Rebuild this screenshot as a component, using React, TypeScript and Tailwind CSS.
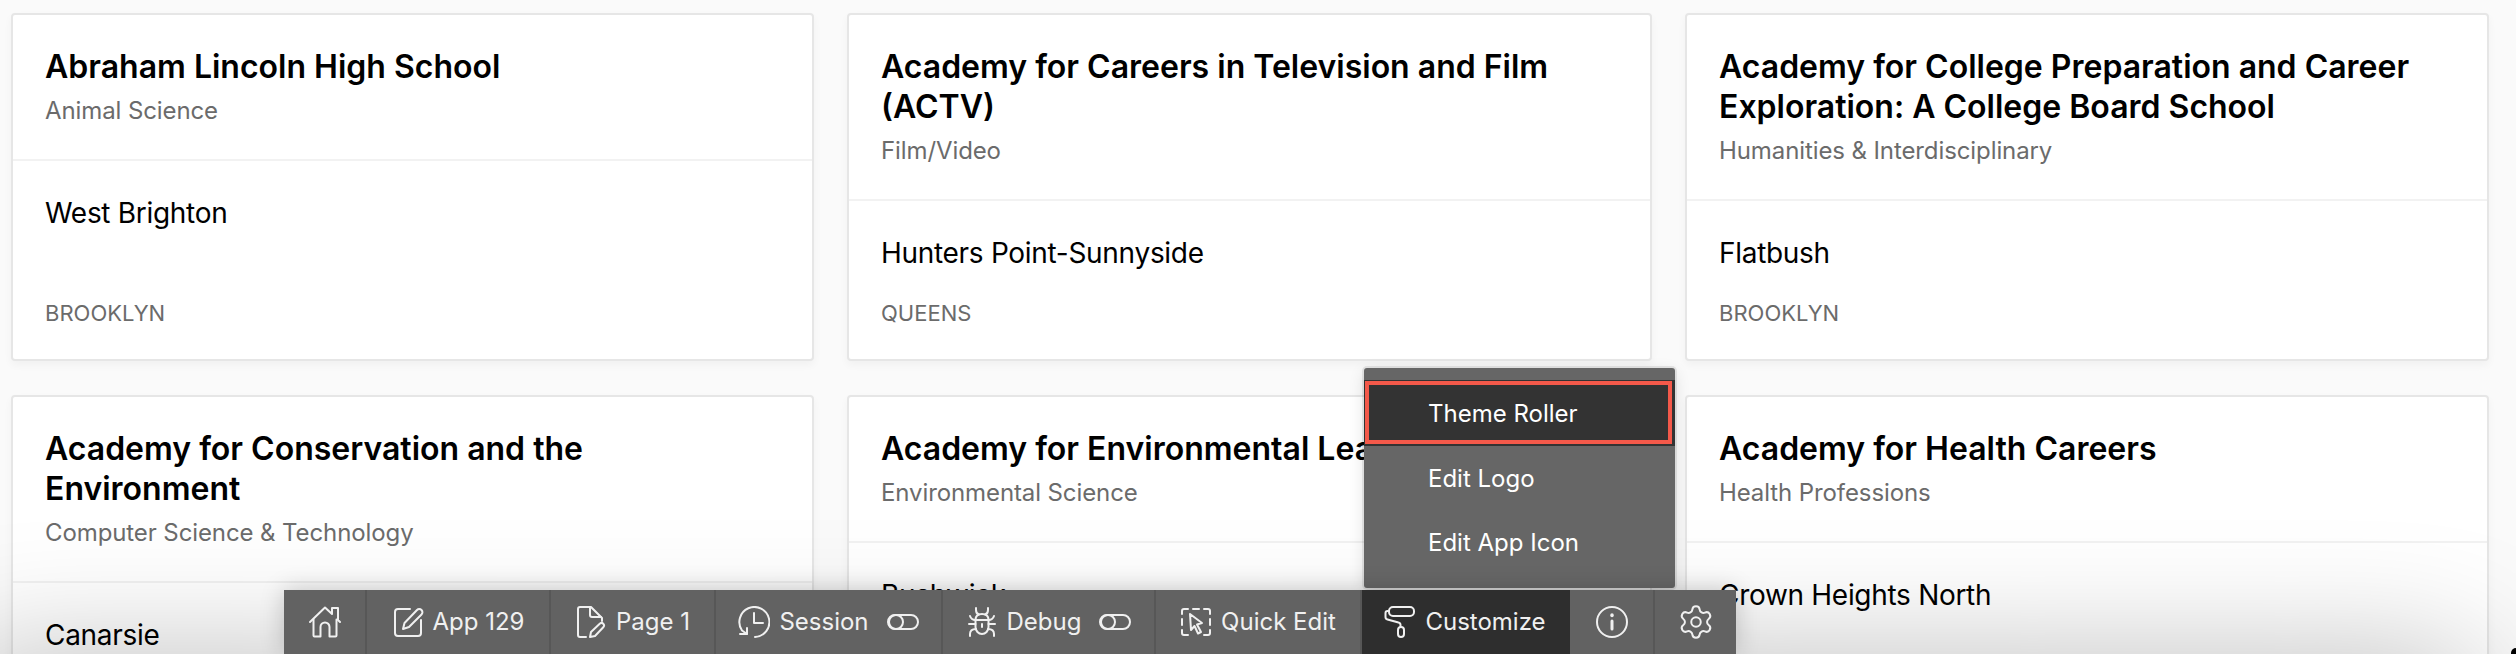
import { Settings } from "lucide-react";
import type { ReactNode } from "react";

const schools = [
  { name: "Abraham Lincoln High School", field: "Animal Science", area: "West Brighton", borough: "BROOKLYN" },
  { name: "Academy for Careers in Television and Film (ACTV)", field: "Film/Video", area: "Hunters Point-Sunnyside", borough: "QUEENS" },
  { name: "Academy for College Preparation and Career Exploration: A College Board School", field: "Humanities & Interdisciplinary", area: "Flatbush", borough: "BROOKLYN" },
  { name: "Academy for Conservation and the Environment", field: "Computer Science & Technology", area: "Canarsie", borough: "BROOKLYN" },
  { name: "Academy for Environmental Leadership", field: "Environmental Science", area: "Bushwick", borough: "BROOKLYN" },
  { name: "Academy for Health Careers", field: "Health Professions", area: "Crown Heights North", borough: "BROOKLYN" },
];

function SchoolCard({ school }: { school: (typeof schools)[number] }) {
  return (
    <div className="flex h-[348px] flex-col rounded-[4px] border-2 border-[#e6e6e6] bg-white shadow-[0_4px_8px_rgba(0,0,0,0.04)]">
      <div className="border-b-2 border-[#f2f2f2] px-[32px] pt-[32px] pb-[32px]">
        <h2 className="text-[32px] leading-[40px] font-semibold text-black">{school.name}</h2>
        <p className="mt-[8px] text-[24px] leading-[32px] tracking-[-0.1px] text-[#6b6b6b]">{school.field}</p>
      </div>
      <div className="flex flex-1 flex-col justify-between px-[32px] pt-[30px] pb-[30px]">
        <p className="text-[28px] leading-[44px] tracking-[-0.3px] text-black">{school.area}</p>
        <p className="text-[22px] leading-[32px] text-[#6b6b6b]">{school.borough}</p>
      </div>
    </div>
  );
}

function ToolbarItem({ width, active, children }: { width: string; active?: boolean; children: ReactNode }) {
  return (
    <div
      className={`flex h-full shrink-0 items-center justify-center border-r-2 ${width} ${
        active ? "border-[#2e2e2e] bg-[#2e2e2e]" : "border-[#575757]"
      }`}
    >
      {children}
    </div>
  );
}

function Icon({ children }: { children: ReactNode }) {
  return (
    <svg
      viewBox="0 0 32 32"
      className="mr-[9px] h-[32px] w-[32px] shrink-0"
      fill="none"
      stroke="currentColor"
      strokeWidth={2}
      strokeLinecap="round"
      strokeLinejoin="round"
    >
      {children}
    </svg>
  );
}

function SessionToggle() {
  return (
    <svg viewBox="0 0 32 16" className="ml-[18px] h-[16px] w-[32px] shrink-0" fill="none" stroke="currentColor" strokeWidth={2}>
      <rect x="1" y="1" width="30" height="14" rx="7" />
      <circle cx="9" cy="8" r="7" />
    </svg>
  );
}

export default function App() {
  return (
    <div className="relative h-[654px] w-[2516px] overflow-hidden bg-[#fafafa] font-['Inter',sans-serif]">
      <div className="grid grid-cols-[803px_805px_804px] gap-x-[33px] gap-y-[34px] pt-[13px] pl-[11px]">
        {schools.map((school) => (
          <SchoolCard key={school.name} school={school} />
        ))}
      </div>

      {/* soft shade rising from the bottom of the window */}
      <div className="absolute top-[654px] right-[40px] left-[-40px] h-[200px] shadow-[0_0_128px_rgba(0,0,0,0.26)]" />

      {/* Customize menu */}
      <div className="absolute top-[368px] left-[1364px] w-[311px] rounded-[3px] bg-[#666666] pt-[12px] pb-[14px] text-[24px] text-white shadow-[0_0_0_2px_rgba(0,0,0,0.08),0_4px_16px_rgba(0,0,0,0.12)]">
        <div className="h-[66px] bg-[#333333] pt-px pr-[3px] pb-[2px] pl-px">
          <div className="flex h-full items-center border-4 border-[#f4594a] pt-[2px] pl-[59px]">Theme Roller</div>
        </div>
        <div className="flex h-[64px] items-center pt-px pl-[64px]">Edit Logo</div>
        <div className="flex h-[64px] items-center pt-px pl-[64px]">Edit App Icon</div>
      </div>

      {/* Developer toolbar */}
      <div className="absolute top-[590px] left-[284px] flex h-[64px] items-center bg-[#626262] text-[24px] text-[#f0f0f0] shadow-[0_0_24px_rgba(0,0,0,0.2)]">
        <ToolbarItem width="w-[83px]">
          <svg viewBox="0 0 32 32" className="h-[32px] w-[32px]" fill="none" stroke="currentColor" strokeWidth={2} strokeLinecap="round" strokeLinejoin="round">
            <path d="M1 16 16 1.5l7 6.5V2h6v12l2 2" />
            <path d="M4.5 13.5V29.5a1 1 0 0 0 1 1h6V21a4.5 4.5 0 0 1 9 0v9.500h6a1 1 0 0 0 1-1V13.500" />
          </svg>
        </ToolbarItem>
        <ToolbarItem width="w-[184px]">
          <Icon>
            <path d="M18 3H6a3 3 0 0 0-3 3v21a3 3 0 0 0 3 3h20a3 3 0 0 0 3-3V14" />
            <path d="M11 23l1.500-6L25 4a2.500 2.500 0 0 1 4.500 4.500L17 21z" />
          </Icon>
          <span>App 129</span>
        </ToolbarItem>
        <ToolbarItem width="w-[165px]">
          <Icon>
            <path d="M11 31H5a2 2 0 0 1-2-2V3a2 2 0 0 1 2-2h11l11 11v3" />
            <path d="M15 2v7a2 2 0 0 0 2 2h9" />
            <path d="M15 31l1-5 9-8.500a2.500 2.500 0 0 1 3.500 3.500L20 30z" />
          </Icon>
          <span>Page 1</span>
        </ToolbarItem>
        <ToolbarItem width="w-[227px]">
          <Icon>
            <path d="M17 31A15 15 0 1 0 4 24.500L9 28" />
            <path d="M9 22v6H2" />
            <path d="M16 7v10h9" />
          </Icon>
          <span>Session</span>
          <SessionToggle />
        </ToolbarItem>
        <ToolbarItem width="w-[213px]">
          <Icon>
            <path d="M9.500 14c0-4 2.500-6 6.500-6s6.500 2 6.500 6v7c0 4-3 7-6.500 7s-6.500-3-6.500-7z" />
            <path d="M9.500 14h13" />
            <path d="M16 18v3" />
            <path d="M10 2v2c0 2 1 4 3 4.500" />
            <path d="M22 2v2c0 2-1 4-3 4.500" />
            <path d="M3 18h6.500" />
            <path d="M22.500 18H29" />
            <path d="M4 10c1 3 3 4 5.500 4" />
            <path d="M28 10c-1 3-3 4-5.500 4" />
            <path d="M4 30v-2c0-3 2-5 6-5" />
            <path d="M28 30v-2c0-3-2-5-6-5" />
          </Icon>
          <span>Debug</span>
          <SessionToggle />
        </ToolbarItem>
        <ToolbarItem width="w-[206px]">
          <Icon>
            <path d="M2 8V5a2 2 0 0 1 2-2h4" />
            <path d="M13 3h6" />
            <path d="M24 3h4a2 2 0 0 1 2 2v3" />
            <path d="M2 13v6" />
            <path d="M30 13v6" />
            <path d="M2 24v3a2 2 0 0 0 2 2h4" />
            <path d="M24 29h4a2 2 0 0 0 2-2v-3" />
            <path d="M10 8l12 9-5 1.500 4 7.500-3 1.500-3.500-7.500L11 24z" />
          </Icon>
          <span>Quick Edit</span>
        </ToolbarItem>
        <ToolbarItem width="w-[208px]" active>
          <Icon>
            <rect x="5" y="1" width="25" height="9" rx="4" />
            <path d="M5 5H3.500a2 2 0 0 0-2 2v4a2.500 2.500 0 0 0 2 2.500l11 3a2.500 2.500 0 0 1 2 2.500v2" />
            <rect x="14" y="21" width="6" height="10" rx="3" />
          </Icon>
          <span>Customize</span>
        </ToolbarItem>
        <ToolbarItem width="w-[85px]">
          <svg viewBox="0 0 32 32" className="h-[32px] w-[32px]" fill="none" stroke="currentColor" strokeWidth={2} strokeLinecap="round">
            <circle cx="16" cy="16" r="15" />
            <path d="M16 15v8" strokeWidth={3} />
            <path d="M16 9v.5" strokeWidth={3.500} />
          </svg>
        </ToolbarItem>
        <div className="flex h-full w-[81px] items-center justify-center">
          <Settings className="h-[38px] w-[38px]" strokeWidth={1.25} />
        </div>
      </div>

      {/* window corner */}
      <div className="absolute right-0 bottom-0 h-[6px] w-[5px] rounded-tl-full bg-black" />
    </div>
  );
}
